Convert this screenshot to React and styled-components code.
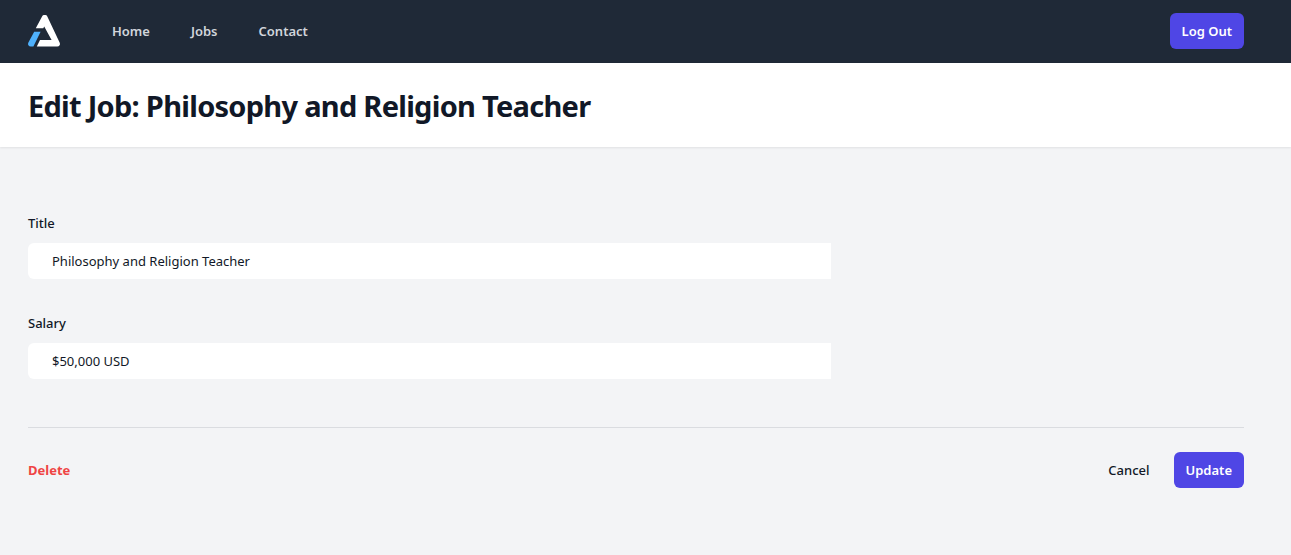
import React from "react";
import styled, { createGlobalStyle, css } from "styled-components";

const GlobalStyle = createGlobalStyle`
  *, *::before, *::after { box-sizing: border-box; }
  html { background: #f3f4f6; }
  body {
    margin: 0;
    background: #f3f4f6;
    color: #111827;
    font-family: "Segoe UI", "Noto Sans", "Open Sans", sans-serif;
    font-size: 13px;
    line-height: 20px;
  }
  button, input { font: inherit; }
`;

const Container = styled.div`
  max-width: 1291px;
  margin: 0 auto;
  padding: 0 47px 0 28px;
`;

const NavBar = styled.nav`
  padding-bottom: 1px;
  background: #1f2937;
`;

const NavRow = styled(Container)`
  display: flex;
  align-items: center;
  height: 62px;
`;

const Logo = styled.svg`
  display: block;
  flex: none;
  width: 32px;
  height: 32px;
`;

const NavLinks = styled.div`
  display: flex;
  flex: 1;
  gap: 17px;
  margin-left: 40px;
`;

const NavLink = styled.a`
  padding: 8px 12px;
  border-radius: 6px;
  color: #d1d5db;
  font-weight: 600;
  text-decoration: none;
`;

const PrimaryButton = styled.button`
  padding: 8px 12px;
  border: 0;
  border-radius: 6px;
  background: #4f46e5;
  color: #fff;
  font-weight: 600;
  cursor: pointer;
`;

const PageHeader = styled.header`
  padding: 25px 0 23px;
  background: #fff;
  box-shadow: 0 1px 2px rgba(0, 0, 0, 0.08);
`;

const Heading = styled.h1`
  margin: 0;
  font-size: 29px;
  line-height: 36px;
  font-weight: 700;
  letter-spacing: -0.025em;
`;

const Form = styled.form`
  padding: 64px 0;
`;

const Fields = styled.div`
  display: grid;
  grid-template-columns: repeat(6, minmax(0, 1fr));
  gap: 32px 24px;
  padding-bottom: 48px;
  border-bottom: 1px solid #dadce0;
`;

const Field = styled.div`
  grid-column: span 4;
  display: flex;
  flex-direction: column;
  gap: 8px;
`;

const Label = styled.label`
  line-height: 24px;
  font-weight: 500;
`;

const TextInput = styled.input`
  width: 100%;
  height: 36px;
  padding: 6px 24px;
  border: 0;
  border-radius: 6px 0 0 6px;
  background: #fff;
  color: #111827;
`;

const Actions = styled.div`
  display: flex;
  align-items: center;
  justify-content: space-between;
  padding-top: 24px;
`;

const ActionGroup = styled.div`
  display: flex;
  align-items: center;
  gap: 24px;
`;

const textAction = css`
  padding: 0;
  border: 0;
  background: none;
  line-height: 24px;
  text-decoration: none;
  cursor: pointer;
`;

const DeleteButton = styled.button`
  ${textAction}
  color: #ef4444;
  font-weight: 700;
`;

const CancelLink = styled.a`
  ${textAction}
  color: #111827;
  font-weight: 500;
`;

const fields = [
  { id: "title", label: "Title", value: "Philosophy and Religion Teacher" },
  { id: "salary", label: "Salary", value: "$50,000 USD" },
];

export default function App() {
  return (
    <>
      <GlobalStyle />
      <NavBar>
        <NavRow>
          <Logo viewBox="0 0 32 32" aria-hidden="true">
            <path
              fill="#fff"
              d="M14.2 1.2Q14.8 0 16 0h1.4q1.2 0 1.8 1.2l12.4 26.2q.7 1.6 0 2.8-.7 1.4-2.4 1.4H8.8L12 25h11.6L16.2 11.6l-.9 1.6H7.8z"
            />
            <path
              fill="#4fb1fc"
              d="M6.2 16.8h6.4L5.4 31.6H2.8Q1.2 31.6.4 30.2q-.7-1.2 0-2.6z"
            />
          </Logo>
          <NavLinks>
            <NavLink href="#home">Home</NavLink>
            <NavLink href="#jobs">Jobs</NavLink>
            <NavLink href="#contact">Contact</NavLink>
          </NavLinks>
          <PrimaryButton type="button">Log Out</PrimaryButton>
        </NavRow>
      </NavBar>
      <PageHeader>
        <Container>
          <Heading>Edit Job: Philosophy and Religion Teacher</Heading>
        </Container>
      </PageHeader>
      <Container as="main">
        <Form onSubmit={(event) => event.preventDefault()}>
          <Fields>
            {fields.map(({ id, label, value }) => (
              <Field key={id}>
                <Label htmlFor={id}>{label}</Label>
                <TextInput id={id} name={id} type="text" defaultValue={value} />
              </Field>
            ))}
          </Fields>
          <Actions>
            <DeleteButton type="button">Delete</DeleteButton>
            <ActionGroup>
              <CancelLink href="#job">Cancel</CancelLink>
              <PrimaryButton type="submit">Update</PrimaryButton>
            </ActionGroup>
          </Actions>
        </Form>
      </Container>
    </>
  );
}
